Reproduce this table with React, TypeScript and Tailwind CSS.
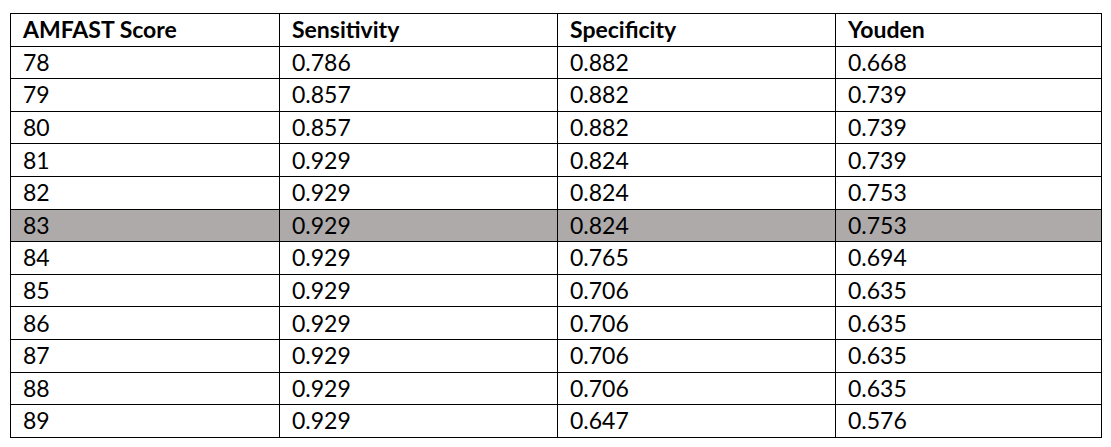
import React from 'react';

const rows: [string, string, string, string][] = [
  ['78', '0.786', '0.882', '0.668'],
  ['79', '0.857', '0.882', '0.739'],
  ['80', '0.857', '0.882', '0.739'],
  ['81', '0.929', '0.824', '0.739'],
  ['82', '0.929', '0.824', '0.753'],
  ['83', '0.929', '0.824', '0.753'],
  ['84', '0.929', '0.765', '0.694'],
  ['85', '0.929', '0.706', '0.635'],
  ['86', '0.929', '0.706', '0.635'],
  ['87', '0.929', '0.706', '0.635'],
  ['88', '0.929', '0.706', '0.635'],
  ['89', '0.929', '0.647', '0.576'],
];

const headers = ['AMFAST Score', 'Sensitivity', 'Specificity', 'Youden'];

const App = () => {
  return (
    <div className="w-[1111px] h-[447px] bg-white pt-[13px] pl-[10px] font-['Lato',sans-serif] text-black">
      <table className="border-collapse table-fixed w-[1091px]">
        <colgroup>
          <col className="w-[269px]" />
          <col className="w-[278px]" />
          <col className="w-[278px]" />
          <col className="w-[266px]" />
        </colgroup>
        <thead>
          <tr>
            {headers.map((h) => (
              <th
                key={h}
                className="border border-black h-[32.6px] p-0 pl-[12px] text-left font-bold text-[23px] leading-none"
              >
                {h}
              </th>
            ))}
          </tr>
        </thead>
        <tbody>
          {rows.map((r) => (
            <tr key={r[0]} className={r[0] === '83' ? 'bg-[#aeaaaa]' : ''}>
              {r.map((c, i) => (
                <td
                  key={i}
                  className="border border-black h-[32.6px] p-0 pl-[12px] text-[23px] leading-none"
                >
                  {c}
                </td>
              ))}
            </tr>
          ))}
        </tbody>
      </table>
    </div>
  );
};

export default App;
